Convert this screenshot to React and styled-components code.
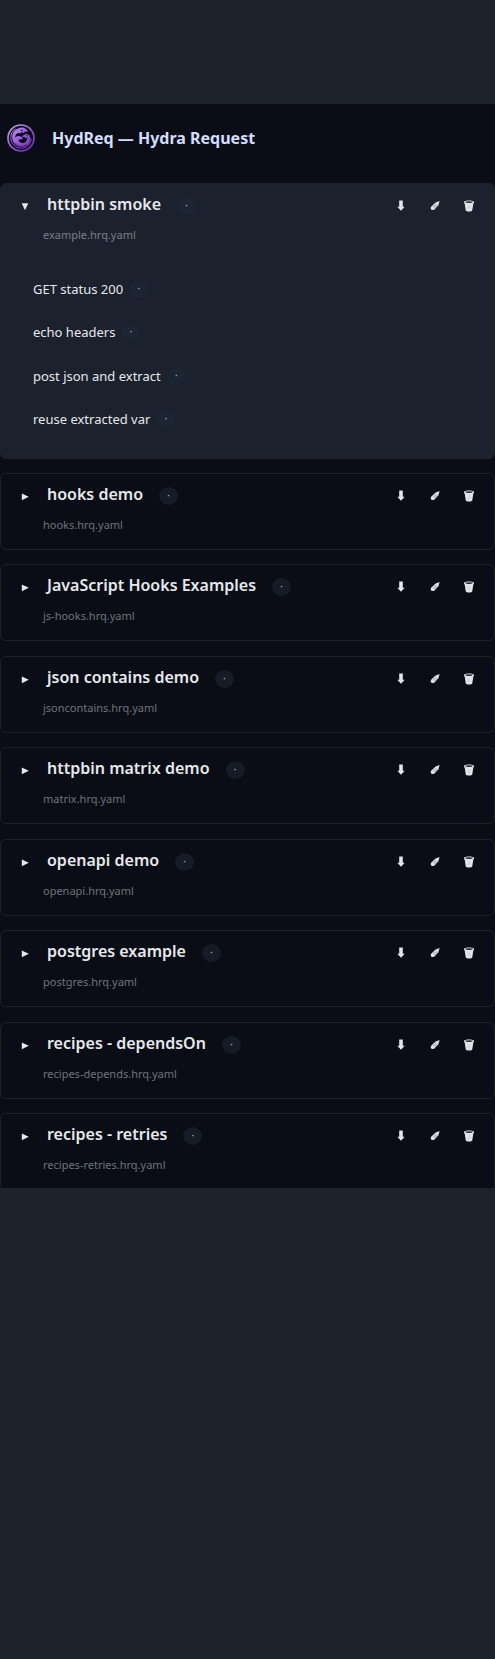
import React from "react";
import styled, { createGlobalStyle } from "styled-components";

const Global = createGlobalStyle`
  * { box-sizing: border-box; }
  html, body { margin: 0; background: #1d232a; }
  body { font-family: "Noto Sans", sans-serif; color: #e6e8ec; overflow: hidden; }
`;

const Page = styled.div`
  min-height: 1659px;
  padding-top: 104px;
  background: #1d232a;
`;

const Panel = styled.main`
  height: 1084px;
  overflow: hidden;
  background: #0a0d15;
`;

const Header = styled.header`
  display: flex;
  align-items: center;
  gap: 17px;
  height: 79px;
  padding: 0 0 12px 7px;
`;

const Brand = styled.h1`
  margin: 0;
  font-size: 16px;
  line-height: 24px;
  font-weight: 700;
  color: #d5dcff;
  white-space: nowrap;
`;

const List = styled.div`
  display: flex;
  flex-direction: column;
  gap: 14.45px;
`;

const Card = styled.section`
  flex: none;
  height: ${(p) => (p.$open ? "275.55px" : "77px")};
  border: 1px solid #212121;
  border-radius: 6px;
  background: ${(p) => (p.$open ? "#1b212d" : "transparent")};
  padding: 9px 18px 0 20px;
`;

const Top = styled.div`
  display: flex;
  align-items: center;
  height: 26px;
`;

const Toggle = styled.svg`
  width: 8px;
  height: 8px;
  margin: 2px 18px 0 0;
  fill: #e6e8ec;
`;

const Title = styled.h2`
  margin: 0 16px 0 0;
  padding-bottom: 4px;
  font-size: 16px;
  line-height: 24px;
  font-weight: 600;
  white-space: nowrap;
`;

const Badge = styled.span`
  display: flex;
  align-items: center;
  justify-content: center;
  flex: none;
  width: 19px;
  height: 18px;
  border-radius: 50%;
  background: ${(p) => (p.$open ? "#1c2634" : "#171d29")};
  color: #b4b8bf;
  opacity: 0.95;
  font-size: 11px;
  line-height: 16px;
  padding-bottom: 2px;
`;

const Actions = styled.div`
  display: flex;
  gap: 20px;
  margin: 0 0 0 auto;
`;

const Icon = styled.svg`
  width: 14px;
  height: 14px;
  fill: #e3e5ea;
`;

const FileName = styled.div`
  margin: 8px 0 0 22px;
  font-size: 11px;
  line-height: 16px;
  color: ${(p) => (p.$open ? "#7b7f88" : "#70737a")};
`;

const Tests = styled.div`
  margin: 17px 0 0 -9px;
  padding: 7px 0 0 20px;
  height: 189px;
  border-left: 1px solid #1a1f29;
`;

const Test = styled.div`
  display: flex;
  align-items: center;
  gap: 6px;
  height: 43.5px;
  font-size: 13px;
  line-height: 20px;
`;

const suites = [
  ["httpbin smoke", "example"],
  ["hooks demo", "hooks"],
  ["JavaScript Hooks Examples", "js-hooks"],
  ["json contains demo", "jsoncontains"],
  ["httpbin matrix demo", "matrix"],
  ["openapi demo", "openapi"],
  ["postgres example", "postgres"],
  ["recipes - dependsOn", "recipes-depends"],
  ["recipes - retries", "recipes-retries"],
];
const tests = ["GET status 200", "echo headers", "post json and extract", "reuse extracted var"];

function Logo() {
  return (
    <svg width="28" height="28" viewBox="0 0 28 28" fill="none">
      <defs>
        <linearGradient id="violet" x1="4" y1="3" x2="24" y2="26" gradientUnits="userSpaceOnUse">
          <stop stopColor="#c194f3" />
          <stop offset=".55" stopColor="#9552df" />
          <stop offset="1" stopColor="#6932a5" />
        </linearGradient>
      </defs>
      <circle cx="14" cy="14" r="13" stroke="url(#violet)" strokeWidth="1.7" />
      <path d="M8.500 5C5.500 6.700 3.800 9.800 3.800 13.600c0 6 4.600 10.600 10.400 10.600 5.400 0 9.800-4 10-9.400" stroke="url(#violet)" strokeWidth="1" />
      <path fill="url(#violet)" d="m9 5.600 3.600-1.800 3.800-.2 3.200 1.800 1 2.400-2.800-.3-1 1.400-2.200-1-1 1.300-2.200-.3C9 9.700 8.100 11.400 8.200 13.500l1.800-1.300 2.600-.3 2.600 1.400.8 2.200-2.300-.4-2.300 1.200c.8 1.700 2.200 2.600 4.100 2.600 3 0 4.900-2 4.700-5.500l-2 .8-.6-1.200-2.400.3 1.300-2.300 3-1 2.700.9 1.300 3.300c.2 5-3.700 8.800-8.800 8.800-5.600 0-9.500-4.200-9.500-9.700 0-3.200 1.300-5.800 3.800-7.700Z" />
      <path d="M7.300 18.700c3.400 4.200 8.600 4.700 12.400 1.800" stroke="#201239" strokeWidth=".6" />
      <path d="m13.500 6 2.500.8M19.500 11.500l1.500.5" stroke="#191127" strokeWidth=".9" />
    </svg>
  );
}

function Suite({ name, file, open }) {
  return (
    <Card $open={open}>
      <Top>
        <Toggle viewBox="0 0 8 8">
          <path d={open ? "M.7.3h6.600L4 7.200Z" : "M.8.4v6.800L7.800 3.700Z"} />
        </Toggle>
        <Title>{name}</Title>
        <Badge $open={open}>·</Badge>
        <Actions>
          <Icon viewBox="0 0 14 14"><path d="M5.200 1.600h3.600v6.200h1.900L7 11.800 3.300 7.800h1.900Z" /></Icon>
          <Icon viewBox="0 0 14 14">
            <path d="M11.600 2 7.600 3.400 3.400 7.500Q2.400 8.700 2.800 10 3.400 11.400 5.300 11L6.500 10.400 10.400 6.200Z" />
            <path d="m5 8.200 3.300-3.200M6.400 9.200 9.500 6" stroke="#626873" strokeWidth=".6" />
          </Icon>
          <Icon viewBox="0 0 14 14">
            <path d="M2 3c0-2 10-2 10 0v1l-.7.5-1 6.800C10 13 4 13 3.700 11.300l-1-6.800L2 4Z" />
            <ellipse cx="7" cy="3.100" rx="3.700" ry=".9" fill="#252a33" />
            <path d="m5 6 4 4M9 6l-4 4M7 6v5" stroke="#c5c8cd" strokeWidth=".4" />
          </Icon>
        </Actions>
      </Top>
      <FileName $open={open}>{file}.hrq.yaml</FileName>
      {open && (
        <Tests>
          {tests.map((test) => <Test key={test}>{test}<Badge $open>·</Badge></Test>)}
        </Tests>
      )}
    </Card>
  );
}

export default function App() {
  return (
    <Page>
      <Global />
      <Panel>
        <Header><Logo /><Brand>HydReq — Hydra Request</Brand></Header>
        <List>
          {suites.map(([name, file], i) => <Suite key={file} name={name} file={file} open={i === 0} />)}
        </List>
      </Panel>
    </Page>
  );
}
